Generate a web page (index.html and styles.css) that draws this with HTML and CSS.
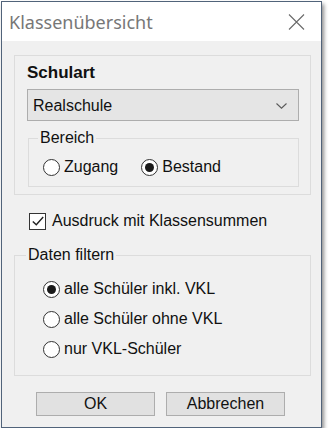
FILE: index.html
```html
<!DOCTYPE html>
<html lang="de">
<head>
    <meta charset="UTF-8">
    <meta name="viewport" content="width=device-width, initial-scale=1.0">
    <link rel="stylesheet" href="styles.css">
</head>
<body>

<div class="window">
    <div class="titlebar">
        <span class="title">Klassenübersicht</span>
        <svg class="close" width="17" height="16" viewBox="0 0 17 16">
            <path d="M1 0.5 L16 15.5 M16 0.5 L1 15.5" stroke="#6a6a6a" stroke-width="1.1" fill="none"/>
        </svg>
    </div>

    <div class="client">
        <div class="group">
            <div class="heading">Schulart</div>
            <div class="combo">
                <span>Realschule</span>
                <svg width="11" height="6" viewBox="0 0 11 6">
                    <path d="M0.5 0.5 L5.5 5.2 L10.5 0.5" stroke="#5a5a5a" stroke-width="1.1" fill="none"/>
                </svg>
            </div>
            <fieldset class="bereich">
                <legend>Bereich</legend>
                <div class="row">
                    <label class="opt"><span class="radio"></span>Zugang</label>
                    <label class="opt second"><span class="radio on"></span>Bestand</label>
                </div>
            </fieldset>
        </div>

        <label class="check-row">
            <span class="checkbox">
                <svg width="14" height="14" viewBox="0 0 14 14">
                    <path d="M1.8 7.4 L5.3 10.8 L12.2 3" stroke="#222" stroke-width="1.4" fill="none"/>
                </svg>
            </span>
            Ausdruck mit Klassensummen
        </label>

        <fieldset class="filter">
            <legend>Daten filtern</legend>
            <label class="opt line"><span class="radio on"></span>alle Schüler inkl. VKL</label>
            <label class="opt line"><span class="radio"></span>alle Schüler ohne VKL</label>
            <label class="opt line"><span class="radio"></span>nur VKL-Schüler</label>
        </fieldset>

        <div class="buttons">
            <div class="btn">OK</div>
            <div class="btn">Abbrechen</div>
        </div>
    </div>
</div>

</body>
</html>
```

FILE: styles.css
```css
body {
    margin: 0;
    background: #fff;
    font-family: "Liberation Sans", Arial, sans-serif;
    font-size: 16px;
    color: #111;
}

.window {
    box-sizing: border-box;
    width: 321px;
    height: 427px;
    margin: 1px 0 0 1px;
    border: 1px solid #51637a;
    background: #f0f0f0;
    box-shadow: 2px 3px 4px rgba(0, 0, 0, 0.45);
    display: flex;
    flex-direction: column;
}

.titlebar {
    height: 39px;
    background: #fff;
    display: flex;
    align-items: center;
    justify-content: space-between;
    padding: 0 16px 0 7px;
}

.title {
    font-family: "Noto Sans", "Open Sans", sans-serif;
    font-size: 18px;
    color: #777;
}

.close {
    margin-top: 1px;
}

.client {
    flex: 1;
    display: flex;
    flex-direction: column;
}

.group {
    margin: 14px 0 0 12px;
    width: 297px;
    box-sizing: border-box;
    border: 1px solid #dcdcdc;
    padding: 7px 0 7px 12px;
}

.heading {
    font-size: 17px;
    font-weight: bold;
    line-height: 20px;
}

.combo {
    box-sizing: border-box;
    margin-top: 6px;
    width: 272px;
    height: 32px;
    border: 1px solid #adadad;
    background: #e5e5e5;
    display: flex;
    align-items: center;
    justify-content: space-between;
    padding: 1px 11px 0 5px;
}

.combo svg {
    margin-top: 1px;
}

fieldset {
    margin: 0;
    border: 1px solid #dcdcdc;
    min-width: 0;
}

legend {
    padding: 0 2px;
    line-height: 18px;
}

.bereich {
    margin: 8px 0 0 1px;
    width: 271px;
    box-sizing: border-box;
    padding: 10px 0 9px 9px;
}

.row {
    display: flex;
    margin-left: 5px;
}

.opt {
    display: flex;
    align-items: center;
    height: 20px;
    line-height: 20px;
}

.opt.second {
    margin-left: 23px;
}

.radio {
    box-sizing: border-box;
    width: 17px;
    height: 17px;
    border: 1px solid #333;
    border-radius: 50%;
    background: #fff;
    margin-right: 4px;
    display: flex;
    align-items: center;
    justify-content: center;
}

.radio.on::after {
    content: "";
    width: 9px;
    height: 9px;
    border-radius: 50%;
    background: #1a1a1a;
}

.check-row {
    display: flex;
    align-items: center;
    height: 20px;
    margin: 16px 0 0 27px;
}

.checkbox {
    box-sizing: border-box;
    width: 17px;
    height: 17px;
    border: 1px solid #333;
    background: #fff;
    margin-right: 6px;
    display: flex;
    align-items: center;
    justify-content: center;
}

.filter {
    margin: 15px 0 0 12px;
    width: 297px;
    box-sizing: border-box;
    padding: 15px 0 16px 11px;
}

.line {
    margin-left: 17px;
}

.line + .line {
    margin-top: 10px;
}

.buttons {
    display: flex;
    gap: 11px;
    margin: 16px 0 0 34px;
}

.btn {
    box-sizing: border-box;
    width: 119px;
    height: 24px;
    border: 1px solid #adadad;
    background: #e1e1e1;
    text-align: center;
    line-height: 22px;
}
```
